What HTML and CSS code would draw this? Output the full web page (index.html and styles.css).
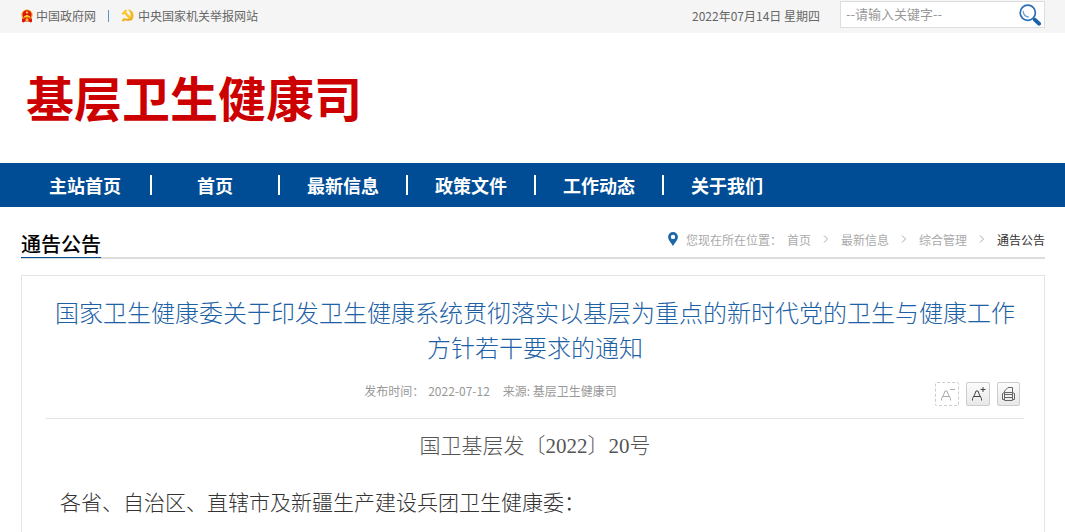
FILE: index.html
```
<!DOCTYPE html>
<html lang="zh-CN">
<head>
  <meta charset="UTF-8">
  <meta name="viewport" content="width=device-width, initial-scale=1.0">
  <title>基层卫生健康司</title>
  <link rel="stylesheet" href="styles.css">
</head>
<body>
  <div class="topbar">
    <div class="top-links">
      <a href="#">
        <svg class="icon-emblem" width="12" height="14" viewBox="0 0 12 14">
          <circle cx="6" cy="6" r="5.6" fill="#f0a01c"/>
          <circle cx="6" cy="5.6" r="4.400" fill="#d9140c"/>
          <path d="M6 1.800l.5 1 1.100.1-.8.800.2 1.100-1-.5-1 .5.2-1.100-.8-.8 1.100-.1z" fill="#ffd43b"/>
          <path d="M3 8.500V7h1.500V6h3v1H9v1.500z" fill="#ffc42e"/>
          <path d="M1 9.500h10v3.200L9.500 13.500 8 12.500H4L2.500 13.500 1 12.700z" fill="#d9140c"/>
          <circle cx="6" cy="10.800" r="1.500" fill="#ffc42e"/>
        </svg>
        中国政府网</a>
      <span class="top-sep"></span>
      <a href="#">
        <svg class="icon-party" width="13" height="13" viewBox="0 0 13 13">
          <path d="M6.500.5c4 .2 6.400 3 6 6.500-.5 3.600-4.400 5.400-8.100 4.100l-1.700 1.700L.6 11.400l2.400-2.700 1.400.7c2.600.8 4.800-.4 5.100-2.700C9.800 4.300 9 2.200 6.500.5z" fill="#f5b81f"/>
          <path d="M.5 4.500L4.200.8l2.200.4L5 2.900l6.800 7.300-1.900 1.900-6.700-7.300-1.100 1.300z" fill="#fbc52c"/>
          <path d="M4.500 10.900c3 .8 6 0 7.200-2.400" fill="none" stroke="#d97a12" stroke-width=".7"/>
        </svg>
        中央国家机关举报网站</a>
    </div>
    <span class="date">2022年07月14日 星期四</span>
    <form class="search">
      <input type="text" placeholder="--请输入关键字--" aria-label="请输入关键字">
      <button type="button" aria-label="搜索">
        <svg width="22" height="22" viewBox="0 0 22 22">
          <circle cx="8.800" cy="8.800" r="7.600" fill="#fff" stroke="#2a6fb5" stroke-width="1.700"/>
          <path d="M4.300 7.500c.2 3 2 5 5 5.500" fill="none" stroke="#6ba0d2" stroke-width="1.300" stroke-linecap="round"/>
          <path d="M14.200 14.200l1.600 1.500" stroke="#2a6fb5" stroke-width="2"/>
          <path d="M16 15.900l4 3.700" stroke="#1b62ab" stroke-width="4" stroke-linecap="round"/>
        </svg>
      </button>
    </form>
  </div>

  <div class="header">
    <h1 class="logo">基层卫生健康司</h1>
  </div>

  <nav class="nav">
    <ul>
      <li><a href="#">主站首页</a></li>
      <li><a href="#">首页</a></li>
      <li><a href="#">最新信息</a></li>
      <li><a href="#">政策文件</a></li>
      <li><a href="#">工作动态</a></li>
      <li><a href="#">关于我们</a></li>
    </ul>
  </nav>

  <div class="location">
    <h2>通告公告</h2>
    <div class="crumbs">
      <svg class="pin" width="10" height="14" viewBox="0 0 10 14">
        <path fill-rule="evenodd" d="M5 0a4.900 4.900 0 0 1 4.900 4.900C9.900 8 6.500 11 5 14 3.500 11 .1 8 .1 4.900A4.900 4.900 0 0 1 5 0zM5 2.700a2.200 2.200 0 1 0 0 4.400 2.200 2.200 0 0 0 0-4.400z" fill="#1c67a8"/>
      </svg>
      <span class="crumb-label">您现在所在位置：</span>
      <a href="#">首页</a>
      <svg class="arrow" width="6" height="8" viewBox="0 0 6 8"><path d="M1 .5L4.500 4 1 7.500"/></svg>
      <a href="#">最新信息</a>
      <svg class="arrow" width="6" height="8" viewBox="0 0 6 8"><path d="M1 .5L4.500 4 1 7.500"/></svg>
      <a href="#">综合管理</a>
      <svg class="arrow" width="6" height="8" viewBox="0 0 6 8"><path d="M1 .5L4.500 4 1 7.500"/></svg>
      <a href="#" class="current">通告公告</a>
    </div>
  </div>

  <div class="article">
    <h3 class="title">国家卫生健康委关于印发卫生健康系统贯彻落实以基层为重点的新时代党的卫生与健康工作方针若干要求的通知</h3>
    <div class="source">
      <p><span>发布时间：</span><span class="time">2022-07-12</span><span>来源: 基层卫生健康司</span></p>
      <div class="tools">
        <button type="button" class="off" aria-label="缩小字体">
          <svg width="22" height="22" viewBox="0 0 22 22"><path d="M5.500 17.500v-2l2-3.500 1.500-4h2l1.500 4 2 3.500v2M7 13.500h6M14 6.500h5"/></svg>
        </button>
        <button type="button" aria-label="放大字体">
          <svg width="22" height="22" viewBox="0 0 22 22"><path d="M5.500 17.500v-2l2-3.500 1.500-4h2l1.500 4 2 3.500v2M7 13.500h6M13.500 6.500h5M16 4v5"/></svg>
        </button>
        <button type="button" class="print" aria-label="打印">
          <svg width="21" height="22" viewBox="0 0 21 22"><path d="M6.500 9.500V8l3.500-3.500h4.500v5M6.500 9.500h8M6.500 9.500L4.500 10.500v6h2M14.500 9.500l2 1v6h-2M6.500 9.500v8h8v-8M6.500 11.500h8M6.500 14.500h8"/></svg>
        </button>
      </div>
    </div>
    <div class="content">
      <p class="number">国卫基层发〔2022〕20号</p>
      <p>各省、自治区、直辖市及新疆生产建设兵团卫生健康委：</p>
    </div>
  </div>
</body>
</html>
```
FILE: styles.css
```
*{
  box-sizing: border-box;
}
body {
  display: flex;
  flex-direction: column;
  min-height: 100vh;
  margin: 0;
  background-color: #fff;
  font-family: "Noto Sans CJK SC", sans-serif;
  font-size: 12px;
  color: #666;
}
h1, h2, h3, p, ul{
  margin: 0;
  padding: 0;
}
a{
  color: inherit;
  text-decoration: none;
}
svg{
  flex: none;
  display: block;
}
button{
  padding: 0;
  cursor: pointer;
}

/* top bar */
.topbar{
  display: flex;
  align-items: center;
  height: 33px;
  padding: 0 20px 2px 21px;
  background-color: #f5f5f5;
}
.top-links{
  display: flex;
  align-items: center;
  flex: 1;
}
.top-links a{
  display: flex;
  align-items: center;
  gap: 3px;
}
.top-links a:last-child{
  gap: 4px;
}
.top-sep{
  width: 1px;
  height: 12px;
  margin: 0 12px;
  background-color: #5b93c4;
}
.date{
  margin-right: 20px;
}
.search{
  display: flex;
  align-items: center;
  width: 205px;
  height: 27px;
  margin-bottom: 2px;
  border: 1px solid #ddd;
  background-color: #fff;
}
.search input{
  flex: 1;
  min-width: 0;
  padding: 0 5px 2px;
  border: none;
  outline: none;
  background: none;
  font-family: inherit;
  font-size: 13px;
}
.search input::placeholder{
  color: #999;
}
.search button{
  margin-right: 3px;
  border: none;
  background: none;
}

/* header */
.header{
  height: 130px;
  padding: 26px;
}
.logo{
  font-size: 48px;
  line-height: 74px;
  color: #c00;
}
.nav{
  padding: 0 20px;
  background-color: #004d96;
}
.nav ul{
  display: flex;
  align-items: center;
  height: 44px;
  list-style: none;
}
.nav li{
  width: 128px;
  border-right: 2px solid #fff;
  font-size: 18px;
  font-weight: bold;
  line-height: 20px;
  text-align: center;
  color: #fff;
}
.nav li:first-child{
  width: 132px;
}
.nav li:last-child{
  border-right-color: transparent;
}

/* location */
.location{
  display: flex;
  justify-content: space-between;
  margin: 20px 20px 16px 21px;
  border-bottom: 2px solid #ddd;
}
.location h2{
  height: 31px;
  margin-bottom: -1px;
  border-bottom: 1px solid #004d96;
  font-size: 20px;
  font-weight: 500;
  line-height: 34px;
  color: #000;
}
.crumbs{
  display: flex;
  align-items: center;
  height: 24px;
  color: #aaa;
}
.pin{
  margin-right: 8px;
}
.crumb-label{
  margin-right: 5px;
}
.arrow{
  margin: 0 12px;
  fill: none;
  stroke: #aaa;
}
.current{
  color: #333;
}

/* article */
.article{
  flex: 1;
  margin: 0 20px 0 21px;
  padding: 18px 20px 0 24px;
  border: 1px solid #e4e4e4;
  border-bottom: none;
}
.title{
  font-size: 24px;
  font-weight: 300;
  line-height: 35px;
  text-align: center;
  color: #1d61a5;
}
.source{
  display: flex;
  align-items: flex-start;
  margin-top: 18px;
  padding: 0 4px 12px 0;
  border-bottom: 1px solid #e4e4e4;
}
.source p{
  flex: 1;
  line-height: 18px;
  text-align: center;
  color: #999;
}
.time{
  margin: 0 13px 0 4px;
}
.tools{
  display: flex;
  gap: 7px;
}
.tools button{
  width: 24px;
  height: 24px;
  border: 1px solid #ccc;
  border-radius: 2px;
  background: linear-gradient(#fcfcfc, #e8e8e8);
}
.tools svg{
  fill: none;
  stroke: #444;
}
.tools .off{
  border-style: dashed;
  background: #fff;
}
.tools .off svg{
  stroke: #aaa;
}
.tools .print{
  width: 23px;
}
.tools .print svg{
  stroke: #666;
}
.content{
  padding: 10px 14px;
  font-size: 21px;
  font-weight: 300;
  line-height: 34px;
  color: #333;
}
.number{
  margin-bottom: 21px;
  font-family: "Liberation Serif", "Noto Sans CJK SC", serif;
  text-align: center;
  color: #555;
}
```
